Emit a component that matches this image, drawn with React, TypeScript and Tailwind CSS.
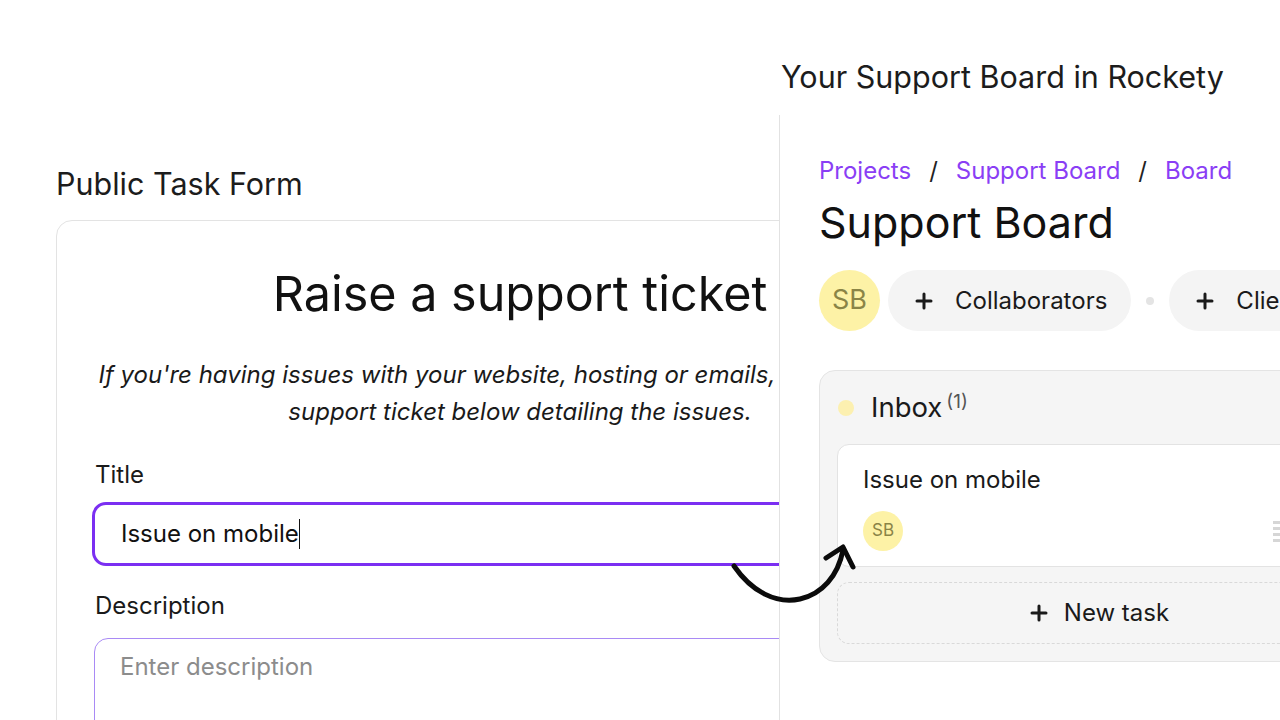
import { Plus } from 'lucide-react'

const FONT = { fontFamily: 'Inter, "Noto Sans", sans-serif' }

function Avatar({ size }: { size: 'lg' | 'sm' }) {
  return (
    <div
      className={`shrink-0 rounded-full bg-[#fdf2a6] text-[#8a8446] flex items-center justify-center ${
        size === 'lg' ? 'w-[61px] h-[61px] text-[27px]' : 'w-[40px] h-[40px] text-[17px]'
      }`}
    >
      SB
    </div>
  )
}

function PublicForm() {
  return (
    <div className="w-[779px] shrink-0 overflow-hidden pt-[165px] pl-[56px]">
      <div className="text-[30.5px] leading-[38px] text-[#1c1c1c] whitespace-nowrap">Public Task Form</div>
      <div className="mt-[17px] w-[928px] h-[560px] rounded-2xl border border-[#e3e3e3] bg-white px-[35px] pt-[43px]">
        <h1 className="text-center text-[48.5px] leading-[60px] text-[#111] whitespace-nowrap">Raise a support ticket</h1>
        <p className="mt-[32px] text-center italic text-[24px] leading-[37px] text-[#1a1a1a] whitespace-nowrap">
          If you're having issues with your website, hosting or emails, please raise a
          <br />
          support ticket below detailing the issues.
        </p>
        <div className="mt-[29px] pl-[3px] text-[24px] leading-[32px] text-[#1a1a1a]">Title</div>
        <div className="mt-[11px] h-[64px] rounded-[14px] border-[3px] border-[#7b2ff2] flex items-center pl-[26px] text-[24px] text-[#111]">
          Issue on mobile
          <span className="inline-block w-[1.5px] h-[30px] bg-[#111]" />
        </div>
        <div className="mt-[24px] pl-[3px] text-[24px] leading-[32px] text-[#1a1a1a]">Description</div>
        <div className="mt-[16px] ml-[2px] h-[140px] rounded-[14px] border border-[#a98af5] pl-[25px] pt-[12px] text-[24px] leading-[32px] text-[#8c8c8c]">
          Enter description
        </div>
      </div>
    </div>
  )
}

function BoardPanel() {
  return (
    <div className="flex-1 min-w-0 flex flex-col">
      <div className="pt-[58px] pl-[2px] text-[30.5px] leading-[38px] text-[#1c1c1c] whitespace-nowrap">Your Support Board in Rockety</div>
      <div className="mt-[19px] flex-1 border-l border-[#e2e2e2] bg-white pl-[39px] pt-[40px] overflow-hidden">
        <div className="flex items-center gap-[18px] text-[24px] leading-[32px] whitespace-nowrap">
          <span className="text-[#8a3ef5]">Projects</span>
          <span className="text-[#222]">/</span>
          <span className="text-[#8a3ef5]">Support Board</span>
          <span className="text-[#222]">/</span>
          <span className="text-[#8a3ef5]">Board</span>
        </div>
        <h2 className="mt-[10px] text-[43px] leading-[50px] text-[#111] whitespace-nowrap">Support Board</h2>
        <div className="mt-[23px] flex items-center whitespace-nowrap">
          <Avatar size="lg" />
          <div className="shrink-0 ml-[8px] h-[61px] rounded-full bg-[#f4f4f4] flex items-center pl-[24px] pr-[24px] gap-[19px] text-[24px] text-[#1a1a1a]">
            <Plus className="w-[24px] h-[24px]" strokeWidth={3} />
            Collaborators
          </div>
          <div className="shrink-0 mx-[15px] w-[8px] h-[8px] rounded-full bg-[#e4e4e4]" />
          <div className="shrink-0 h-[61px] rounded-full bg-[#f4f4f4] flex items-center pl-[24px] pr-[24px] gap-[19px] text-[24px] text-[#1a1a1a]">
            <Plus className="w-[24px] h-[24px]" strokeWidth={3} />
            Clients
          </div>
        </div>
        <div className="mt-[39px] w-[558px] rounded-2xl border border-[#e4e4e4] bg-[#f5f5f5] px-[17px] pt-[17px] pb-[17px]">
          <div className="flex items-center h-[40px] pl-[1px]">
            <div className="w-[16px] h-[16px] rounded-full bg-[#fcf0b0]" />
            <span className="ml-[17px] text-[27.5px] text-[#1a1a1a]">Inbox</span>
            <span className="self-start mt-[4px] ml-[4px] text-[19px] leading-none text-[#555]">(1)</span>
          </div>
          <div className="mt-[16px] h-[123px] rounded-xl border border-[#e3e3e3] bg-white pl-[25px] pt-[20px]">
            <div className="text-[24px] leading-[30px] text-[#1a1a1a]">Issue on mobile</div>
            <div className="mt-[16px] flex items-center pr-[67px]">
              <Avatar size="sm" />
              <div className="ml-auto flex flex-col gap-[3px]">
                <span className="block w-[18px] h-[3px] bg-[#d6d6d6]" />
                <span className="block w-[18px] h-[3px] bg-[#d6d6d6]" />
                <span className="block w-[18px] h-[3px] bg-[#d6d6d6]" />
                <span className="block w-[18px] h-[3px] bg-[#d6d6d6]" />
              </div>
            </div>
          </div>
          <div className="mt-[15px] h-[62px] rounded-xl border border-dashed border-[#d9d9d9] flex items-center justify-center gap-[13px] text-[24px] text-[#1a1a1a]">
            <Plus className="w-[24px] h-[24px]" strokeWidth={3} />
            New task
          </div>
        </div>
      </div>
    </div>
  )
}

export default function App() {
  return (
    <div className="relative w-[1280px] h-[720px] overflow-hidden bg-white flex" style={FONT}>
      <PublicForm />
      <BoardPanel />
      <svg
        className="absolute left-[720px] top-[535px] pointer-events-none"
        width="150"
        height="80"
        viewBox="720 535 150 80"
        fill="none"
        stroke="#0b0b0b"
        strokeWidth="5"
        strokeLinecap="round"
        strokeLinejoin="round"
      >
        <path d="M734 566 C 752 592, 776 604, 800 599 C 822 594, 838 576, 843 550" />
        <path d="M826 558 L 843 547 L 853 567" />
      </svg>
    </div>
  )
}
